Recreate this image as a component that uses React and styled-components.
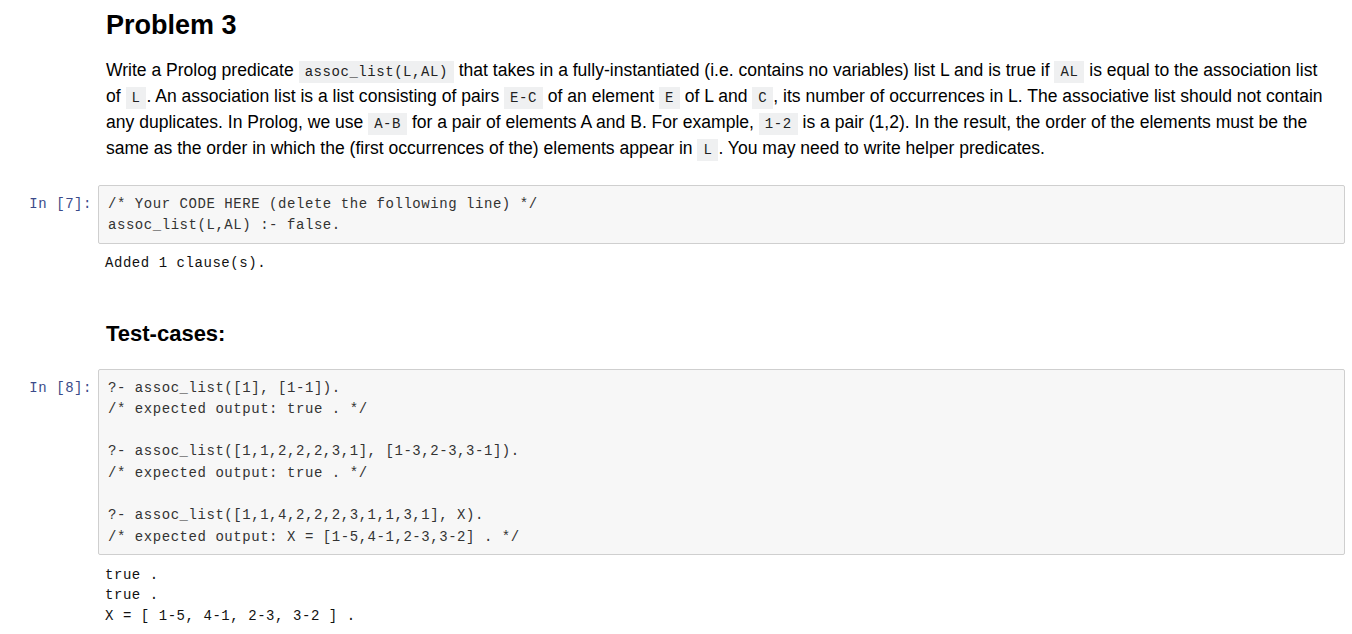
import React from 'react';
import styled, { createGlobalStyle } from 'styled-components';

const GlobalStyle = createGlobalStyle`
  html, body {
    margin: 0;
    padding: 0;
    background: #fff;
  }
  body {
    font-family: "Liberation Sans", Arial, sans-serif;
    color: #000;
  }
`;

const mono = `"Liberation Mono", "DejaVu Sans Mono", monospace`;

const Notebook = styled.div`
  padding: 9px 7px 0 0;
`;

const Cell = styled.div`
  display: grid;
  grid-template-columns: 98px 1fr;
  margin-top: ${(p) => p.$top || 0}px;
`;

const Prompt = styled.div`
  font-family: ${mono};
  font-size: 14px;
  letter-spacing: 0.55px;
  color: #3b4a8a;
  text-align: right;
  padding: 9px 6px 0 0;
  line-height: 21.3px;
`;

const Markdown = styled.div`
  grid-column: 2;
  padding-left: 8px;
`;

const Heading = styled.h2`
  margin: 0;
  font-size: ${(p) => p.$size}px;
  line-height: 32px;
  font-weight: bold;
  color: #000;
`;

const Para = styled.p`
  margin: 16px 0 0;
  font-size: 17.55px;
  line-height: 26px;
  color: #000;
  white-space: nowrap;
`;

const InlineCode = styled.code`
  font-family: ${mono};
  font-size: 14px;
  line-height: 1;
  letter-spacing: 0.55px;
  background: #eff0f1;
  padding: 3px 6px;
  color: #222;
`;

const InputArea = styled.div`
  display: flex;
  flex-direction: column;
`;

const CodeBox = styled.pre`
  margin: 0;
  background: #f7f7f7;
  border: 1px solid #cfcfcf;
  border-radius: 2px;
  padding: 8px 9px 6px;
  font-family: ${mono};
  font-size: 14px;
  letter-spacing: 0.55px;
  line-height: 21.3px;
  color: #333;
  white-space: pre;
`;

const Output = styled.pre`
  margin: ${(p) => p.$top}px 0 0;
  padding-left: 7px;
  font-family: ${mono};
  font-size: 14px;
  letter-spacing: 0.55px;
  line-height: 20.5px;
  color: #111;
  white-space: pre;
`;

const cell1 = `/* Your CODE HERE (delete the following line) */
assoc_list(L,AL) :- false.`;

const cell2 = `?- assoc_list([1], [1-1]).
/* expected output: true . */

?- assoc_list([1,1,2,2,2,3,1], [1-3,2-3,3-1]).
/* expected output: true . */

?- assoc_list([1,1,4,2,2,2,3,1,1,3,1], X).
/* expected output: X = [1-5,4-1,2-3,3-2] . */`;

const out2 = `true .
true .
X = [ 1-5, 4-1, 2-3, 3-2 ] .`;

export default function App() {
  return (
    <>
      <GlobalStyle />
      <Notebook>
        <Cell>
          <Markdown>
            <Heading $size={27}>Problem 3</Heading>
            <Para>
              Write a Prolog predicate <InlineCode>assoc_list(L,AL)</InlineCode> that takes in a
              fully-instantiated (i.e. contains no variables) list L and is true if{' '}
              <InlineCode>AL</InlineCode> is equal to the association list
              <br />
              of <InlineCode>L</InlineCode>. An association list is a list consisting of pairs{' '}
              <InlineCode>E-C</InlineCode> of an element <InlineCode>E</InlineCode> of L and{' '}
              <InlineCode>C</InlineCode>, its number of occurrences in L. The associative list
              should not contain
              <br />
              any duplicates. In Prolog, we use <InlineCode>A-B</InlineCode> for a pair of elements
              A and B. For example, <InlineCode>1-2</InlineCode> is a pair (1,2). In the result,
              the order of the elements must be the
              <br />
              same as the order in which the (first occurrences of the) elements appear in{' '}
              <InlineCode>L</InlineCode>. You may need to write helper predicates.
            </Para>
          </Markdown>
        </Cell>

        <Cell $top={24}>
          <Prompt>In&nbsp;[7]:</Prompt>
          <InputArea>
            <CodeBox>{cell1}</CodeBox>
            <Output $top={9.5}>Added 1 clause(s).</Output>
          </InputArea>
        </Cell>

        <Cell $top={44}>
          <Markdown>
            <Heading $size={22}>Test-cases:</Heading>
          </Markdown>
        </Cell>

        <Cell $top={19}>
          <Prompt>In&nbsp;[8]:</Prompt>
          <InputArea>
            <CodeBox>{cell2}</CodeBox>
            <Output $top={10}>{out2}</Output>
          </InputArea>
        </Cell>
      </Notebook>
    </>
  );
}
